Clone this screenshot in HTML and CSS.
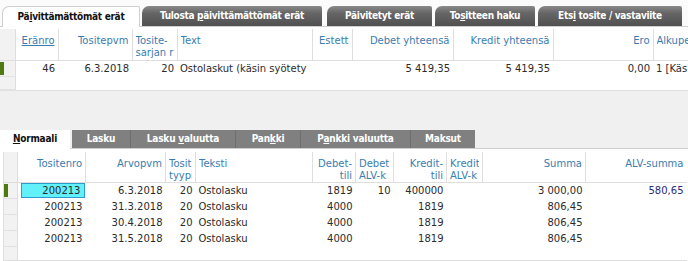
FILE: index.html
```html
<!DOCTYPE html>
<html>
<head>
<meta charset="utf-8">
<link rel="stylesheet" href="styles.css">
</head>
<body>
<div class="toptabs">
  <div class="ttab active">Pä<u>i</u>vittämättömät erät</div>
  <div class="ttab w1">Tulosta <u>p</u>äivittämättömät erät</div>
  <div class="ttab w2">Päivitetyt erät</div>
  <div class="ttab w3">To<u>s</u>itteen haku</div>
  <div class="ttab w4">Ets<u>i</u> tosite / vastaviite</div>
</div>
<div class="grid top">
  <table>
    <colgroup>
      <col class="c15"><col class="c43"><col class="c74"><col class="c45"><col class="c135"><col class="c40"><col class="c101"><col class="c100"><col class="c100"><col class="c100">
    </colgroup>
    <thead>
      <tr>
        <th class="ind"></th>
        <th class="r"><div class="clip"><span class="link">Eränro</span></div></th>
        <th class="r"><div class="clip">Tositepvm</div></th>
        <th><div class="clip">Tosite-<br>sarjan r</div></th>
        <th><div class="clip">Text</div></th>
        <th class="r"><div class="clip">Estett</div></th>
        <th class="r"><div class="clip">Debet yhteensä</div></th>
        <th class="r"><div class="clip">Kredit yhteensä</div></th>
        <th class="r"><div class="clip">Ero</div></th>
        <th><div class="clip">Alkupe</div></th>
      </tr>
    </thead>
    <tbody>
      <tr>
        <td class="ind"><span class="mark"></span></td>
        <td class="r">46</td>
        <td class="r">6.3.2018</td>
        <td class="r">20</td>
        <td><div class="clip">Ostolaskut (käsin syötety</div></td>
        <td></td>
        <td class="r">5 419,35</td>
        <td class="r">5 419,35</td>
        <td class="r">0,00</td>
        <td>1 [Käs</td>
      </tr>
      <tr class="empty"><td class="ind"></td><td colspan="9"></td></tr>
    </tbody>
  </table>
</div>
<div class="graybox"></div>
<div class="subtabs">
  <div class="stab active"><u>N</u>ormaali</div>
  <div class="stab s1">Lasku</div>
  <div class="stab s2">Lasku <u>v</u>aluutta</div>
  <div class="stab s3">Pan<u>k</u>ki</div>
  <div class="stab s4">P<u>a</u>nkki valuutta</div>
  <div class="stab s5">Maksut</div>
</div>
<div class="grid bottom">
  <table>
    <colgroup>
      <col class="c14"><col class="c68"><col class="c80"><col class="c30"><col class="c117"><col class="c43"><col class="c38"><col class="c53"><col class="c36"><col class="c103"><col class="c101">
    </colgroup>
    <thead>
      <tr>
        <th class="ind"></th>
        <th class="r"><div class="clip">Tositenro</div></th>
        <th class="r"><div class="clip">Arvopvm</div></th>
        <th><div class="clip">Tosit<br>tyypi</div></th>
        <th><div class="clip">Teksti</div></th>
        <th class="r"><div class="clip">Debet-<br>tili</div></th>
        <th><div class="clip">Debet<br>ALV-k</div></th>
        <th class="r"><div class="clip">Kredit-<br>tili</div></th>
        <th><div class="clip">Kredit<br>ALV-k</div></th>
        <th class="r"><div class="clip">Summa</div></th>
        <th class="r"><div class="clip">ALV-summa</div></th>
      </tr>
    </thead>
    <tbody>
      <tr>
        <td class="ind"><span class="mark"></span></td>
        <td class="r selcell"><span class="sel">200213</span></td>
        <td class="r">6.3.2018</td>
        <td class="r">20</td>
        <td>Ostolasku</td>
        <td class="r">1819</td>
        <td class="r">10</td>
        <td class="r">400000</td>
        <td></td>
        <td class="r">3 000,00</td>
        <td class="r alv">580,65</td>
      </tr>
      <tr>
        <td class="ind"></td>
        <td class="r">200213</td>
        <td class="r">31.3.2018</td>
        <td class="r">20</td>
        <td>Ostolasku</td>
        <td class="r">4000</td>
        <td></td>
        <td class="r">1819</td>
        <td></td>
        <td class="r">806,45</td>
        <td></td>
      </tr>
      <tr>
        <td class="ind"></td>
        <td class="r">200213</td>
        <td class="r">30.4.2018</td>
        <td class="r">20</td>
        <td>Ostolasku</td>
        <td class="r">4000</td>
        <td></td>
        <td class="r">1819</td>
        <td></td>
        <td class="r">806,45</td>
        <td></td>
      </tr>
      <tr>
        <td class="ind"></td>
        <td class="r">200213</td>
        <td class="r">31.5.2018</td>
        <td class="r">20</td>
        <td>Ostolasku</td>
        <td class="r">4000</td>
        <td></td>
        <td class="r">1819</td>
        <td></td>
        <td class="r">806,45</td>
        <td></td>
      </tr>
      <tr class="empty2"><td class="ind"></td><td colspan="10"></td></tr>
    </tbody>
  </table>
</div>
</body>
</html>
```
FILE: styles.css
```css
html, body {
  margin: 0;
  padding: 0;
  background: #ffffff;
  width: 688px;
  height: 261px;
  overflow: hidden;
  font-family: "DejaVu Sans", Verdana, sans-serif;
  font-size: 10px;
  color: #2b2b2b;
}
u { text-decoration: underline; }

.c14 { width: 14px; } .c15 { width: 15px; } .c30 { width: 30px; }
.c36 { width: 36px; } .c38 { width: 38px; } .c40 { width: 40px; }
.c43 { width: 43px; } .c45 { width: 45px; } .c53 { width: 53px; }
.c68 { width: 68px; } .c74 { width: 74px; } .c80 { width: 80px; }
.c100 { width: 100px; } .c101 { width: 101px; } .c103 { width: 103px; }
.c117 { width: 117px; } .c135 { width: 135px; }

.toptabs {
  display: flex;
  align-items: flex-end;
  height: 27px;
  padding-left: 2px;
  gap: 3px;
  border-bottom: 1px solid #cfcfcf;
  box-sizing: border-box;
  background: #fbfbfb;
}
.ttab {
  height: 20px;
  line-height: 20px;
  font-family: "DejaVu Sans Condensed", "DejaVu Sans", sans-serif;
  font-weight: bold;
  font-size: 10px;
  letter-spacing: -0.3px;
  color: #ffffff;
  text-align: center;
  white-space: nowrap;
  overflow: hidden;
  border-top-left-radius: 7px;
  border-top-right-radius: 2px;
  background: linear-gradient(to bottom, #8a8a8a 0%, #666 35%, #505050 100%);
}
.ttab.active {
  width: 138px;
  height: 21px;
  background: #ffffff;
  color: #111;
  border: 1px solid #cfcfcf;
  border-bottom: none;
  box-sizing: border-box;
  margin-bottom: -1px;
}
.ttab.w1 { width: 180px; margin-left: -1px; }
.ttab.w2 { width: 105px; margin-left: 2px; }
.ttab.w3 { width: 100px; }
.ttab.w4 { width: 144px; }

.grid { overflow: hidden; background: #fff; }
.grid.top { margin-top: 2px; }
.grid table {
  border-collapse: collapse;
  table-layout: fixed;
}
.grid.top table { width: 753px; }
.grid.bottom table { width: 683px; }
.clip { overflow: hidden; white-space: nowrap; }
.grid th {
  font-weight: normal;
  color: #3a7cb0;
  text-align: left;
  vertical-align: top;
  padding: 6px 3px 0 3px;
  line-height: 12px;
  border-left: 1px solid #dedede;
  border-bottom: 1px solid #dedede;
  white-space: nowrap;
  overflow: hidden;
  box-sizing: border-box;
}
.grid.top th { height: 31px; }
.grid th.ind { border-left: none; background: #f2f2f2; }
.grid th.r, .grid td.r { text-align: right; }
.grid .link { text-decoration: underline; }
.grid td {
  padding: 0 3px;
  height: 15px;
  line-height: 15px;
  white-space: nowrap;
  overflow: hidden;
  color: #2b2b2b;
}
.grid td.ind {
  background: #f2f2f2;
  border-bottom: 1px solid #e2e2e2;
  border-right: 1px solid #dedede;
  padding: 0;
  position: relative;
}
.mark {
  position: absolute;
  left: 0;
  top: 1px;
  bottom: 1px;
  width: 4px;
  background: #4f7a12;
}
.grid.top tr.empty td { height: 12px; }
.grid.top { border-bottom: 1px solid #e0e0e0; }

.graybox {
  height: 39px;
  background: #f0f0f0;
}
.subtabs {
  display: flex;
  height: 19px;
  background: #f0f0f0;
  border-bottom: 1px solid #cfcfcf;
  box-sizing: border-box;
}
.stab {
  height: 18px;
  line-height: 18px;
  font-family: "DejaVu Sans Condensed", "DejaVu Sans", sans-serif;
  font-weight: bold;
  font-size: 10px;
  letter-spacing: -0.2px;
  color: #fff;
  background: #808080;
  text-align: center;
  white-space: nowrap;
  border-left: 1px solid #6e6e6e;
  box-sizing: border-box;
}
.stab.active {
  width: 70px;
  background: #fff;
  color: #111;
  border-left: none;
  margin-right: 2px;
  height: 19px;
}
.stab.s1 { width: 58px; border-left: none; }
.stab.s2 { width: 105px; }
.stab.s3 { width: 65px; }
.stab.s4 { width: 110px; }
.stab.s5 { width: 65px; }

.grid.bottom {
  margin-top: 3px;
  padding-left: 3px;
}
.grid.bottom th.ind { border-left: 1px solid #dedede; }
.grid.bottom td.ind { border-left: 1px solid #dedede; }
.grid.bottom th { height: 29px; }
.grid.bottom td.selcell { padding: 0 1px 0 3px; }
.grid.bottom td .sel {
  display: block;
  background: #62f0fa;
  border: 1px solid #2d9ccc;
  height: 13px;
  line-height: 13px;
  padding-right: 3px;
  text-align: right;
}
.grid.bottom td.alv { color: #2a2a7a; }
.grid.bottom tr.empty2 td { height: 13px; border-bottom: 1px solid #dedede; }
```
